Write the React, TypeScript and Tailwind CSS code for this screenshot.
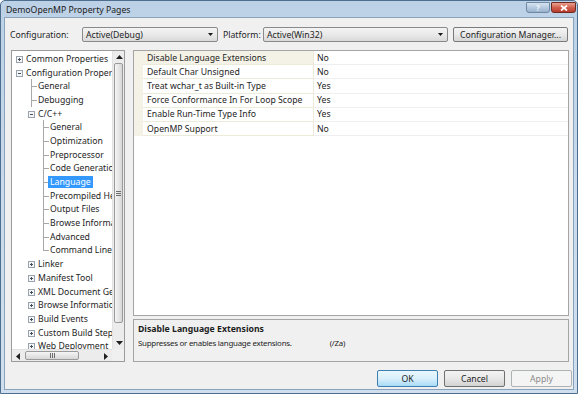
import React from 'react'

type TreeNode = { label: string; level: number; kind: 'plus' | 'minus' | 'tee' | 'end'; selected?: boolean }

const tree: TreeNode[] = [
  { label: 'Common Properties', level: 0, kind: 'plus' },
  { label: 'Configuration Properties', level: 0, kind: 'minus' },
  { label: 'General', level: 1, kind: 'tee' },
  { label: 'Debugging', level: 1, kind: 'tee' },
  { label: 'C/C++', level: 1, kind: 'minus' },
  { label: 'General', level: 2, kind: 'tee' },
  { label: 'Optimization', level: 2, kind: 'tee' },
  { label: 'Preprocessor', level: 2, kind: 'tee' },
  { label: 'Code Generation', level: 2, kind: 'tee' },
  { label: 'Language', level: 2, kind: 'tee', selected: true },
  { label: 'Precompiled Headers', level: 2, kind: 'tee' },
  { label: 'Output Files', level: 2, kind: 'tee' },
  { label: 'Browse Information', level: 2, kind: 'tee' },
  { label: 'Advanced', level: 2, kind: 'tee' },
  { label: 'Command Line', level: 2, kind: 'end' },
  { label: 'Linker', level: 1, kind: 'plus' },
  { label: 'Manifest Tool', level: 1, kind: 'plus' },
  { label: 'XML Document Generator', level: 1, kind: 'plus' },
  { label: 'Browse Information', level: 1, kind: 'plus' },
  { label: 'Build Events', level: 1, kind: 'plus' },
  { label: 'Custom Build Step', level: 1, kind: 'plus' },
  { label: 'Web Deployment', level: 1, kind: 'plus' },
]

const props = [
  { name: 'Disable Language Extensions', value: 'No' },
  { name: 'Default Char Unsigned', value: 'No' },
  { name: 'Treat wchar_t as Built-in Type', value: 'Yes' },
  { name: 'Force Conformance In For Loop Scope', value: 'Yes' },
  { name: 'Enable Run-Time Type Info', value: 'Yes' },
  { name: 'OpenMP Support', value: 'No' },
]

function Glyph({ kind }: { kind: TreeNode['kind'] }) {
  return (
    <svg width="12" height="14" className="shrink-0" shapeRendering="crispEdges">
      {kind === 'tee' && (
        <>
          <line x1="6.5" y1="0" x2="6.5" y2="14" stroke="#a8a8a8" />
          <line x1="6.5" y1="7.5" x2="12" y2="7.5" stroke="#a8a8a8" />
        </>
      )}
      {kind === 'end' && (
        <>
          <line x1="6.5" y1="0" x2="6.5" y2="7.5" stroke="#a8a8a8" />
          <line x1="6.5" y1="7.5" x2="12" y2="7.5" stroke="#a8a8a8" />
        </>
      )}
      {(kind === 'plus' || kind === 'minus') && (
        <>
          <rect x="3.5" y="4.5" width="6" height="6" fill="#f4f6f8" stroke="#9aa3ad" />
          <line x1="5" y1="7.5" x2="8" y2="7.5" stroke="#44505c" />
          {kind === 'plus' && <line x1="6.5" y1="6" x2="6.5" y2="9" stroke="#44505c" />}
        </>
      )}
    </svg>
  )
}

function Arrow({ dir }: { dir: 'up' | 'down' | 'left' | 'right' }) {
  const pts = {
    up: '0,4 3.5,0 7,4',
    down: '0,0 3.5,4 7,0',
    left: '4,0 0,3.5 4,7',
    right: '0,0 4,3.5 0,7',
  }[dir]
  const vertical = dir === 'up' || dir === 'down'
  return (
    <div className="w-[12px] h-[12px] flex items-center justify-center shrink-0">
      <svg width={vertical ? 7 : 4} height={vertical ? 4 : 7}>
        <polygon points={pts} fill="#202020" />
      </svg>
    </div>
  )
}

function Dropdown({ value, width }: { value: string; width: string }) {
  return (
    <div
      className={`${width} h-[15px] flex items-center justify-between pl-[3px] pr-[4px] rounded-[2px] border border-[#8a8a8a] bg-gradient-to-b from-[#f4f4f4] via-[#e9e9e9] to-[#d9d9d9]`}
    >
      <span>{value}</span>
      <svg width="5" height="3">
        <polygon points="0,0 5,0 2.5,3" fill="#1a1a1a" />
      </svg>
    </div>
  )
}

export default function App() {
  return (
    <div className="w-[580px] h-[396px] bg-white font-['Noto_Sans',sans-serif] text-[8.7px] leading-[12px] text-[#1e1e1e]">
      <div className="w-[578px] h-[394px] flex flex-col border border-[#4d6e8f] rounded-t-[5px] bg-gradient-to-b from-[#bcd1e6] via-[#c9dbec] to-[#cfdfee]">
        {/* Title bar */}
        <div className="h-[16px] flex items-start justify-between">
          <span className="pl-[5px] pt-[3px] text-[#1a1a1a]">DemoOpenMP Property Pages</span>
          <div className="flex gap-[1px] mr-[1px] mt-[1px]">
            <div className="w-[24px] h-[11px] flex items-center justify-center rounded-b-[3px] rounded-t-[1px] border border-[#6f88a3] bg-[#b3c7dc] bg-gradient-to-b from-[#d6e3f0] via-[#b7cbe0] to-[#98b2cd] text-[8px] leading-[8px] font-bold text-[#eef3f8]">
              ?
            </div>
            <div className="w-[25px] h-[11px] flex items-center justify-center rounded-b-[3px] rounded-t-[1px] border border-[#6e2a20] bg-[#cc5544] bg-gradient-to-b from-[#e9a090] via-[#d2604f] to-[#b8392a]">
              <svg width="8" height="6">
                <path d="M1 0.5 L7 5.5 M7 0.5 L1 5.5" stroke="#ffffff" strokeWidth="1.7" />
              </svg>
            </div>
          </div>
        </div>

        {/* Client area */}
        <div className="flex-1 px-[3px] pb-[3px] flex flex-col">
          <div className="flex-1 bg-[#f0f0f0] border border-[#8aa3bd] flex flex-col">
            {/* Configuration row */}
            <div className="flex items-center mt-[9px] pl-[5px]">
              <span className="w-[72px]">Configuration:</span>
              <Dropdown value="Active(Debug)" width="w-[136px]" />
              <span className="w-[45px] pl-[5px]">Platform:</span>
              <Dropdown value="Active(Win32)" width="w-[185px]" />
              <div className="ml-[5px] w-[115px] h-[15px] flex items-center justify-center rounded-[2px] border border-[#7a7a7a] bg-gradient-to-b from-[#f4f4f4] via-[#e9e9e9] to-[#d5d5d5]">
                Configuration Manager...
              </div>
            </div>

            {/* Tree + property grid */}
            <div className="flex mt-[8px] ml-[6px] gap-[8px]">
              {/* Tree */}
              <div className="w-[114px] h-[312px] border border-[#9b9b9b] bg-white flex flex-col">
                <div className="flex-1 flex min-h-0">
                  <div className="flex-1 overflow-hidden pt-[1px] pl-[1px]">
                    {tree.map((n, i) => (
                      <div key={i} className="flex items-center h-[13.7px] whitespace-nowrap">
                        {Array.from({ length: n.level }).map((_, j) => (
                          <div key={j} className="w-[12px] shrink-0" />
                        ))}
                        <Glyph kind={n.kind} />
                        <span
                          className={`ml-[-1px] px-[2px] leading-[12px] ${
                            n.selected ? 'bg-[#3399ff] text-white' : ''
                          }`}
                        >
                          {n.label}
                        </span>
                      </div>
                    ))}
                  </div>
                  {/* vertical scrollbar */}
                  <div className="w-[12px] flex flex-col bg-[#ececec] border-l border-[#e2e2e2]">
                    <Arrow dir="up" />
                    <div className="flex-1 px-[1px]">
                      <div className="h-[260px] rounded-[2px] border border-[#9a9a9a] bg-gradient-to-r from-[#f5f5f5] via-[#e6e6e6] to-[#d6d6d6] flex items-center justify-center">
                        <svg width="5" height="5" shapeRendering="crispEdges">
                          <line x1="0" y1="0.5" x2="5" y2="0.5" stroke="#6d6d6d" />
                          <line x1="0" y1="2.5" x2="5" y2="2.5" stroke="#6d6d6d" />
                          <line x1="0" y1="4.5" x2="5" y2="4.5" stroke="#6d6d6d" />
                        </svg>
                      </div>
                    </div>
                    <Arrow dir="down" />
                  </div>
                </div>
                {/* horizontal scrollbar */}
                <div className="h-[12px] flex">
                  <div className="flex-1 flex bg-[#ececec] border-t border-[#e2e2e2]">
                    <Arrow dir="left" />
                    <div className="flex-1 py-[1px] pl-[1px]">
                      <div className="w-[54px] h-full rounded-[2px] border border-[#9a9a9a] bg-gradient-to-b from-[#f5f5f5] via-[#e6e6e6] to-[#d6d6d6] flex items-center justify-center">
                        <svg width="5" height="5" shapeRendering="crispEdges">
                          <line x1="0.5" y1="0" x2="0.5" y2="5" stroke="#6d6d6d" />
                          <line x1="2.5" y1="0" x2="2.5" y2="5" stroke="#6d6d6d" />
                          <line x1="4.5" y1="0" x2="4.5" y2="5" stroke="#6d6d6d" />
                        </svg>
                      </div>
                    </div>
                    <Arrow dir="right" />
                  </div>
                  <div className="w-[12px] bg-[#f0f0f0]" />
                </div>
              </div>

              {/* Property grid */}
              <div className="w-[436px] h-[312px] flex flex-col">
                <div className="flex-1 border border-[#a5a5a5] bg-white">
                  {props.map((p, i) => (
                    <div key={i} className="flex h-[14.2px]">
                      <div className="w-[9px] bg-[#f4f2e6]" />
                      <div
                        className={`w-[171px] pl-[4px] flex items-center border-b border-r border-[#ecead9] ${
                          i === 0 ? 'bg-[#f4f2e6]' : ''
                        }`}
                      >
                        {p.name}
                      </div>
                      <div className="flex-1 pl-[3px] flex items-center border-b border-[#efefef]">{p.value}</div>
                    </div>
                  ))}
                </div>
                <div className="h-[3px]" />
                <div className="h-[43px] border border-[#a5a5a5] bg-[#f0f0f0] px-[4px] pt-[2px]">
                  <div className="font-bold leading-[14px]">Disable Language Extensions</div>
                  <div className="leading-[14px] text-[7.9px] tracking-[-0.25px]">
                    Suppresses or enables language extensions.<span className="ml-[38px]">(/Za)</span>
                  </div>
                </div>
              </div>
            </div>

            {/* Buttons */}
            <div className="flex justify-end gap-[6px] mt-[8px] pr-[1px]">
              <div className="w-[61px] h-[17px] flex items-center justify-center rounded-[2px] border border-[#3c7fb1] bg-gradient-to-b from-[#eaf6fd] via-[#d9f0fc] to-[#a9dbf6]">
                OK
              </div>
              <div className="w-[61px] h-[17px] flex items-center justify-center rounded-[2px] border border-[#707070] bg-gradient-to-b from-[#f3f3f3] via-[#e8e8e8] to-[#d2d2d2]">
                Cancel
              </div>
              <div className="w-[61px] h-[17px] flex items-center justify-center rounded-[2px] border border-[#adb2b5] bg-[#f4f4f4] text-[#8c8c8c]">
                Apply
              </div>
            </div>
          </div>
        </div>
      </div>
    </div>
  )
}
